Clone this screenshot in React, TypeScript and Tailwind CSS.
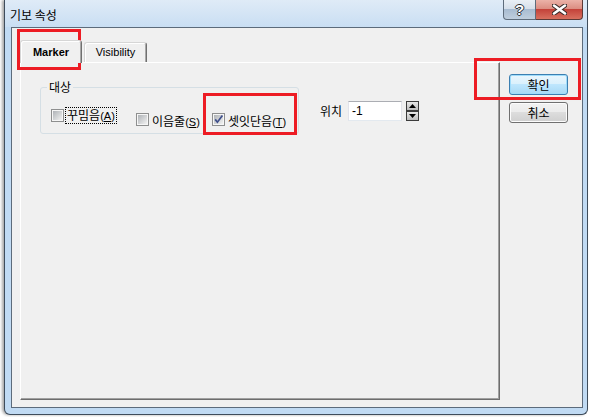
import React from "react";

const KR = "font-['Noto_Sans_CJK_KR','Noto_Sans',sans-serif]";

function CheckBox({ checked, id }: { checked?: boolean; id: string }) {
  return (
    <svg width="13" height="13" viewBox="0 0 13 13" className="shrink-0">
      <defs>
        <linearGradient id={id} x1="0" y1="0" x2="1" y2="1">
          <stop offset="0" stopColor="#aeb2b6" />
          <stop offset="1" stopColor="#f2f2f2" />
        </linearGradient>
      </defs>
      <rect x="0.5" y="0.5" width="12" height="12" fill="#f6f6f6" stroke="#8e8f8f" />
      <rect x="2" y="2" width="9" height="9" fill={`url(#${id})`} />
      {checked && (
        <path d="M3.2 6.4 L5.4 9.2 L10.4 2.6" fill="none" stroke="#3e4f8c" strokeWidth="1.7" />
      )}
    </svg>
  );
}

function Label({ text, acc }: { text: string; acc: string }) {
  return (
    <span className="text-[12px] leading-[14px] text-black whitespace-nowrap">
      {text}
      <span className="font-['Liberation_Sans',sans-serif] text-[11px]">
        (<span className="underline">{acc}</span>)
      </span>
    </span>
  );
}

function Spin() {
  return (
    <div className="flex flex-col w-[13px] h-[20px] ml-[4px]">
      {[0, 1].map((i) => (
        <div
          key={i}
          className="flex-1 border border-[#3c3c3c] bg-[linear-gradient(#e8e8e8,#bdbdbd)] flex items-center justify-center"
        >
          <svg width="7" height="4" viewBox="0 0 7 4">
            <path d={i === 0 ? "M0 4 L3.5 0 L7 4 Z" : "M0 0 L3.5 4 L7 0 Z"} fill="#000" />
          </svg>
        </div>
      ))}
    </div>
  );
}

export default function App() {
  return (
    <div className={`relative w-[589px] h-[417px] bg-white overflow-hidden ${KR}`}>
      <div className="ml-[4px] w-[584px] h-[415px] border border-t-0 border-[#3e4c5b] rounded-b-[6px] bg-[#c0daf3] shadow-[-2px_0_3px_rgba(0,0,0,0.35)] flex flex-col">
        {/* title bar */}
        <div className="h-[27px] flex items-start bg-[linear-gradient(#dfebf7,#c9def3)]">
          <div className="pl-[5px] pt-[8px] text-[12px] leading-[14px] text-black">기보 속성</div>
          <div className="ml-auto mr-[4px] flex">
            <div className="w-[33px] h-[20px] border border-t-0 border-[#5e6c7b] rounded-bl-[4px] bg-[linear-gradient(#e9eff5,#d4dee9_50%,#a8bcd1_50%,#bfcedd)] flex items-center justify-center">
              <span className="font-['Liberation_Sans',sans-serif] font-bold text-[15px] leading-[15px] text-white [text-shadow:1px_0_0_#2a3036,-1px_0_0_#2a3036,0_1px_0_#2a3036,0_-1px_0_#2a3036]">
                ?
              </span>
            </div>
            <div className="w-[47px] h-[20px] border border-t-0 border-l-0 border-[#5e3a36] rounded-br-[4px] bg-[linear-gradient(#ebb2a8,#da8a7e_50%,#c4433a_50%,#d8705f)] flex items-center justify-center">
              <svg width="15" height="11" viewBox="0 0 15 11">
                <path d="M2 1.5 L13 9.5 M13 1.5 L2 9.5" stroke="#3a2a28" strokeWidth="4.6" strokeLinecap="round" />
                <path d="M2 1.5 L13 9.5 M13 1.5 L2 9.5" stroke="#fff" strokeWidth="2.6" strokeLinecap="round" />
              </svg>
            </div>
          </div>
        </div>

        {/* client */}
        <div className="flex-1 ml-[6px] mr-[4px] mb-[6px] border border-[#5c6b7b] bg-[#f0f0f0] flex">
          <div className="pl-[8px] pt-[12px] flex flex-col">
            <div className="h-[22px] flex items-end">
              <div className="relative z-10 -mb-[1px] w-[62px] h-[23px] border border-b-0 border-[#d6d6d6] border-r-[#707070] rounded-t-[3px] bg-[#f0f0f0] shadow-[inset_1px_1px_0_#fff,inset_-1px_0_0_#a8a8a8] flex items-center justify-center font-['Liberation_Sans',sans-serif] font-bold text-[11px] text-black">
                Marker
              </div>
              <div className="ml-[2px] w-[63px] h-[20px] border border-b-0 border-[#d6d6d6] border-r-[#707070] rounded-t-[3px] bg-[#f0f0f0] shadow-[inset_1px_1px_0_#fff,inset_-1px_0_0_#a8a8a8] flex items-center justify-center font-['Liberation_Sans',sans-serif] text-[11px] text-black">
                Visibility
              </div>
            </div>
            <div className="w-[480px] h-[338px] border border-white border-r-[#6d6d6d] border-b-[#6d6d6d] shadow-[inset_-1px_-1px_0_#a0a0a0] pl-[19px] pt-[24px]">
              <div className="flex items-center">
                <div className="relative w-[259px] h-[47px] border border-[#d5dfe5] rounded-[3px] pl-[10px] pt-[19px] flex items-start">
                  <span className="absolute -top-[8px] left-[6px] px-[2px] bg-[#f0f0f0] text-[12px] leading-[14px] text-black">
                    대상
                  </span>
                  <div className="w-[85px] flex items-center">
                    <CheckBox id="c1" />
                    <span className="ml-[1px] px-[1px] border border-dotted border-black flex">
                      <Label text="꾸밈음" acc="A" />
                    </span>
                  </div>
                  <div className="w-[76px] flex items-center">
                    <CheckBox id="c2" />
                    <span className="ml-[3px]">
                      <Label text="이음줄" acc="S" />
                    </span>
                  </div>
                  <div className="flex items-center">
                    <CheckBox id="c3" checked />
                    <span className="ml-[3px]">
                      <Label text="셋잇단음" acc="T" />
                    </span>
                  </div>
                </div>
                <span className="ml-[21px] text-[12px] text-black">위치</span>
                <div className="ml-[6px] w-[54px] h-[20px] border border-[#abadb3] border-l-[#e2e3ea] border-r-[#e2e3ea] border-b-[#e3e9ef] bg-white pl-[3px] flex items-center font-['Liberation_Sans',sans-serif] text-[12px] text-black">
                  -1
                </div>
                <Spin />
              </div>
            </div>
          </div>
          <div className="ml-[9px] pt-[46px] flex flex-col gap-[7px]">
            <button className="w-[59px] h-[21px] rounded-[3px] border border-[#3c7fb1] bg-[linear-gradient(#eaf6fd,#d9f0fc_50%,#bee6fd_50%,#a7d9f5)] shadow-[inset_0_0_0_1px_#9fdcfb] text-[12px] leading-[14px] text-black">
              확인
            </button>
            <button className="w-[59px] h-[21px] rounded-[3px] border border-[#707070] bg-[linear-gradient(#f2f2f2,#ebebeb_50%,#dddddd_50%,#cfcfcf)] shadow-[inset_0_0_0_1px_#fcfcfc] text-[12px] leading-[14px] text-black">
              취소
            </button>
          </div>
        </div>
      </div>

      {/* red annotation boxes */}
      <div className="absolute left-[17px] top-[29px] w-[64px] h-[41px] border-[3px] border-[#ed1c24]" />
      <div className="absolute left-[203px] top-[93px] w-[94px] h-[42px] border-[3px] border-[#ed1c24]" />
      <div className="absolute left-[474px] top-[58px] w-[107px] h-[42px] border-[3px] border-[#ed1c24]" />
    </div>
  );
}
